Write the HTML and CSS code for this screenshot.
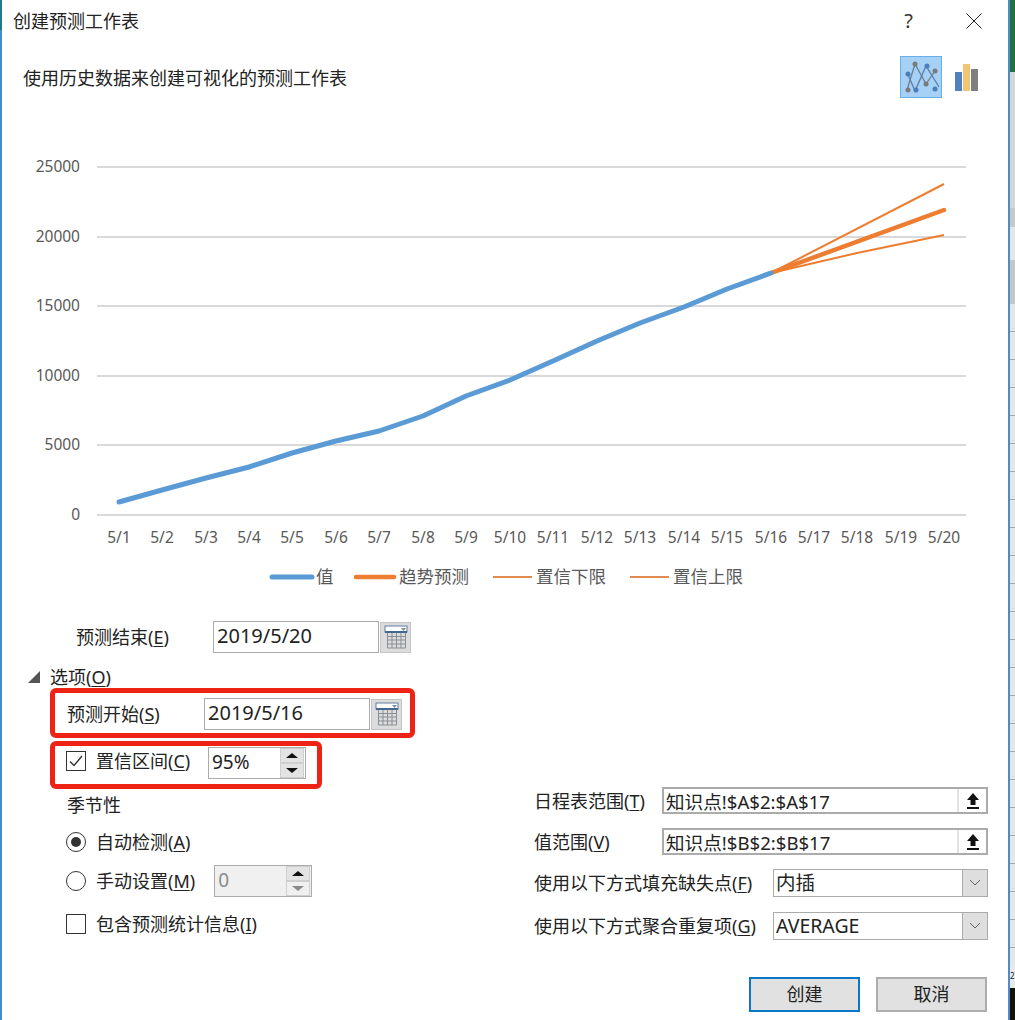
FILE: index.html
```html
<!DOCTYPE html>
<html>
<head>
    <meta charset="UTF-8">
    <title>创建预测工作表</title>
    <link rel="stylesheet" href="styles.css">
</head>
<body>
    <div class="window">
        <div class="left-edge"></div>

        <div class="dialog">
            <!-- Title bar -->
            <div class="titlebar">
                <div class="title">创建预测工作表</div>
                <div class="help">?</div>
                <svg class="close" width="16" height="16" viewBox="0 0 16 16"><path d="M0.5 0.5L15.5 15.5M15.5 0.5L0.5 15.5" stroke="#222" fill="none"/></svg>
            </div>

            <!-- Intro and chart type -->
            <div class="intro">
                <div class="intro-text">使用历史数据来创建可视化的预测工作表</div>
                <div class="type-btn selected">
                    <svg width="40" height="40" viewBox="0 0 40 40">
                        <path d="M6 15L14 34L25 9L38 30" stroke="#5d7fa8" stroke-width="1.3" fill="none"/>
                        <path d="M6 33L14 7L25 27L34 14" stroke="#6f7f92" stroke-width="1.3" fill="none"/>
                        <circle cx="7" cy="17" r="2.5" fill="#4a7ebb"/><circle cx="15" cy="33" r="2.5" fill="#4a7ebb"/>
                        <circle cx="26" cy="9" r="2.5" fill="#4a7ebb"/><circle cx="34" cy="32" r="2.5" fill="#4a7ebb"/>
                        <circle cx="7" cy="33" r="2.5" fill="#7a7a7a"/><circle cx="14" cy="7" r="2.5" fill="#7a7a7a"/>
                        <circle cx="25" cy="27" r="2.5" fill="#7a7a7a"/><circle cx="34" cy="14" r="2.5" fill="#7a7a7a"/>
                    </svg>
                </div>
                <svg class="type-bars" width="24" height="27" viewBox="0 0 24 27">
                    <rect x="0" y="8" width="7" height="19" fill="#4f81bd"/>
                    <rect x="8" y="0" width="7" height="27" fill="#f0c674"/>
                    <rect x="16" y="5" width="7" height="22" fill="#7f7f7f"/>
                </svg>
            </div>

            <!-- Forecast chart, viewBox uses window coordinates -->
            <svg class="chart" width="1006" height="492" viewBox="2 108 1006 492">
                <g stroke="#d9d9d9" stroke-width="2">
                    <path d="M97 167H966M97 237H966M97 306H966M97 376H966M97 445H966M97 515H966"/>
                </g>
                <g class="axis-y" text-anchor="end">
                    <text x="80" y="172">25000</text>
                    <text x="80" y="242">20000</text>
                    <text x="80" y="311">15000</text>
                    <text x="80" y="381">10000</text>
                    <text x="80" y="450">5000</text>
                    <text x="80" y="520">0</text>
                </g>
                <g class="axis-x" text-anchor="middle">
                    <text x="119" y="543">5/1</text>
                    <text x="162" y="543">5/2</text>
                    <text x="206" y="543">5/3</text>
                    <text x="249" y="543">5/4</text>
                    <text x="292" y="543">5/5</text>
                    <text x="336" y="543">5/6</text>
                    <text x="379" y="543">5/7</text>
                    <text x="423" y="543">5/8</text>
                    <text x="466" y="543">5/9</text>
                    <text x="510" y="543">5/10</text>
                    <text x="553" y="543">5/11</text>
                    <text x="597" y="543">5/12</text>
                    <text x="640" y="543">5/13</text>
                    <text x="684" y="543">5/14</text>
                    <text x="727" y="543">5/15</text>
                    <text x="771" y="543">5/16</text>
                    <text x="814" y="543">5/17</text>
                    <text x="857" y="543">5/18</text>
                    <text x="901" y="543">5/19</text>
                    <text x="944" y="543">5/20</text>
                </g>
                <path d="M771 273L944 184" stroke="#ed7d31" stroke-width="2" fill="none"/>
                <path d="M771 273L857 253L944 235" stroke="#ed7d31" stroke-width="2" fill="none"/>
                <path d="M771 273L944 210" stroke="#ed7d31" stroke-width="4.5" stroke-linecap="round" fill="none"/>
                <path d="M119 502L162 490L206 478L249 467L292 453L336 441L379 431L423 416L466 396L510 380L553 361L597 341L640 323L684 307L727 289L771 273" stroke="#5b9bd5" stroke-width="5" stroke-linecap="round" stroke-linejoin="round" fill="none"/>
                <path d="M272 577H312" stroke="#5b9bd5" stroke-width="5" stroke-linecap="round"/>
                <path d="M356 577H394" stroke="#ed7d31" stroke-width="4.5" stroke-linecap="round"/>
                <path d="M493 577H532M630 577H669" stroke="#e08b4f" stroke-width="2"/>
                <g class="legend">
                    <text x="316" y="583">值</text>
                    <text x="399" y="583">趋势预测</text>
                    <text x="536" y="583">置信下限</text>
                    <text x="673" y="583">置信上限</text>
                </g>
            </svg>

            <!-- Forecast end -->
            <div class="field end-row">
                <div class="label end-label">预测结束(<u>E</u>)</div>
                <div class="textbox date">2019/5/20</div>
                <div class="cal-btn">
                    <svg width="24" height="24" viewBox="0 0 24 24">
                        <rect x="1" y="1" width="22" height="6" fill="#fff" stroke="#5f7f9f"/>
                        <path d="M1 7H23" stroke="#44688f" stroke-width="2"/>
                        <path d="M17 3h5l-2.500 3z" fill="#7a8ea5"/>
                        <path d="M3.500 8V23M8 8V23M12.500 8V23M17 8V23M21.500 8V23M3.500 11.500H21.500M3.500 15H21.500M3.500 19H21.500M3.500 23H21.500" stroke="#8a8f96" fill="none"/>
                    </svg>
                </div>
            </div>

            <div class="options">
                <!-- Left column -->
                <div class="options-left">
                    <div class="options-head">
                        <svg width="12" height="12" viewBox="0 0 12 12"><path d="M12 0V12H0z" fill="#555"/></svg>
                        <div class="label">选项(<u>O</u>)</div>
                    </div>

                    <div class="red-box start-box">
                        <div class="label start-label">预测开始(<u>S</u>)</div>
                        <div class="textbox date">2019/5/16</div>
                        <div class="cal-btn">
                            <svg width="24" height="24" viewBox="0 0 24 24">
                                <rect x="1" y="1" width="22" height="6" fill="#fff" stroke="#5f7f9f"/>
                                <path d="M1 7H23" stroke="#44688f" stroke-width="2"/>
                                <path d="M17 3h5l-2.500 3z" fill="#7a8ea5"/>
                                <path d="M3.500 8V23M8 8V23M12.500 8V23M17 8V23M21.500 8V23M3.500 11.500H21.500M3.500 15H21.500M3.500 19H21.500M3.500 23H21.500" stroke="#8a8f96" fill="none"/>
                            </svg>
                        </div>
                    </div>

                    <div class="red-box conf-box">
                        <div class="checkbox">
                            <svg width="18" height="18" viewBox="0 0 18 18"><path d="M3 9.500L7 13.500L15 4" stroke="#333" stroke-width="1.400" fill="none"/></svg>
                        </div>
                        <div class="label conf-label">置信区间(<u>C</u>)</div>
                        <div class="spin conf-spin">
                            <div class="spin-value">95%</div>
                            <div class="spin-btns">
                                <div class="spin-btn"><span class="arrow-up"></span></div>
                                <div class="spin-btn"><span class="arrow-down"></span></div>
                            </div>
                        </div>
                    </div>

                    <div class="label season-head">季节性</div>

                    <div class="check-row auto-row">
                        <div class="radio on"></div>
                        <div class="label">自动检测(<u>A</u>)</div>
                    </div>
                    <div class="check-row manual-row">
                        <div class="radio"></div>
                        <div class="label manual-label">手动设置(<u>M</u>)</div>
                        <div class="spin disabled">
                            <div class="spin-value">0</div>
                            <div class="spin-btns">
                                <div class="spin-btn"><span class="arrow-up"></span></div>
                                <div class="spin-btn off"><span class="arrow-down"></span></div>
                            </div>
                        </div>
                    </div>
                    <div class="check-row stats-row">
                        <div class="checkbox"></div>
                        <div class="label">包含预测统计信息(<u>I</u>)</div>
                    </div>
                </div>

                <!-- Right column -->
                <div class="options-right">
                    <div class="field range-row">
                        <div class="label range-label">日程表范围(<u>T</u>)</div>
                        <div class="range-box">
                            <div class="range-value">知识点!$A$2:$A$17</div>
                            <div class="pick-btn"><svg width="14" height="17" viewBox="0 0 14 17"><path d="M7 1L13 8H9.500V13H4.500V8H1zM1 15H13V17H1z" fill="#111"/></svg></div>
                        </div>
                    </div>
                    <div class="field range-row">
                        <div class="label range-label">值范围(<u>V</u>)</div>
                        <div class="range-box">
                            <div class="range-value">知识点!$B$2:$B$17</div>
                            <div class="pick-btn"><svg width="14" height="17" viewBox="0 0 14 17"><path d="M7 1L13 8H9.500V13H4.500V8H1zM1 15H13V17H1z" fill="#111"/></svg></div>
                        </div>
                    </div>
                    <div class="field select-row">
                        <div class="label select-label">使用以下方式填充缺失点(<u>F</u>)</div>
                        <div class="select-box">
                            <div class="select-value">内插</div>
                            <div class="select-btn"><svg width="12" height="8" viewBox="0 0 12 8"><path d="M1 1L6 6L11 1" stroke="#666" fill="none"/></svg></div>
                        </div>
                    </div>
                    <div class="field select-row last">
                        <div class="label select-label">使用以下方式聚合重复项(<u>G</u>)</div>
                        <div class="select-box">
                            <div class="select-value">AVERAGE</div>
                            <div class="select-btn"><svg width="12" height="8" viewBox="0 0 12 8"><path d="M1 1L6 6L11 1" stroke="#666" fill="none"/></svg></div>
                        </div>
                    </div>
                </div>
            </div>

            <!-- Buttons -->
            <div class="footer">
                <div class="btn primary">创建</div>
                <div class="btn">取消</div>
            </div>
        </div>

        <!-- Sliver of the worksheet behind the dialog -->
        <div class="right-edge">
            <div class="sheet-green"></div>
            <div class="sheet-ribbon"></div>
            <div class="sheet-header"></div>
            <div class="sheet-cells"></div>
            <div class="sheet-tabs">2</div>
            <div class="sheet-dark"></div>
        </div>
    </div>
</body>
</html>
```

FILE: styles.css
```css
html, body { margin: 0; padding: 0; background: #fff; }
body { font-family: "Noto Sans", "Noto Sans CJK SC", sans-serif; font-size: 18px; color: #222; }
.window { display: flex; width: 1015px; height: 1020px; overflow: hidden; }
.left-edge { width: 2px; flex: none; background: linear-gradient(#1f7a8c 0, #1f7a8c 30px, #3f8fd0 30px); }
.dialog { width: 1006px; flex: none; background: #fff; }

.titlebar { display: flex; align-items: center; height: 44px; }
.title { margin-left: 11px; margin-top: -2px; flex: 1; line-height: 24px; }
.help { margin-right: 53px; font-size: 20px; margin-top: -3px; color: #333; }
.close { margin-right: 26px; margin-top: -3px; }

.intro { display: flex; align-items: center; height: 64px; padding-left: 21px; }
.intro-text { flex: 1; margin-top: 2px; }
.type-btn { width: 40px; height: 40px; margin-top: 2px; border: 1px solid #6aaee8; background: #a6d1f7; }
.type-btn svg { display: block; }
.type-bars { margin-left: 13px; margin-right: 29px; margin-top: 3px; }

.chart { display: block; }
.chart text { font-family: "Noto Sans", "Noto Sans CJK SC", sans-serif; fill: #595959; }
.axis-y text, .axis-x text { font-size: 15.5px; }
.legend text { font-size: 17.5px; }

.label { white-space: nowrap; line-height: 24px; }
.label u { text-underline-offset: 2px; }
.field { display: flex; align-items: center; }

.textbox { box-sizing: border-box; border: 1px solid #ababab; background: #fff; padding-left: 3px; }
.date { width: 166px; height: 32px; line-height: 28px; font-size: 20px; }
.cal-btn { box-sizing: border-box; width: 31px; height: 31px; margin-left: 1px; background: #dcdcdc; border: 1px solid #c4c4c4; display: flex; align-items: center; justify-content: center; }

.end-row { margin-top: 21px; padding-left: 74px; }
.end-label { width: 137px; }

.options { display: grid; grid-template-columns: 532px 454px; margin-top: 13px; }

.options-head { display: flex; align-items: center; gap: 10px; padding-left: 26px; height: 22px; }
.red-box { box-sizing: border-box; display: flex; align-items: center; margin-left: 48px; border: 5px solid #ee2316; border-radius: 6px; }
.start-box { width: 365px; height: 50px; padding-left: 12px; padding-top: 2px; }
.start-label { width: 137px; }
.conf-box { width: 272px; height: 48px; margin-top: 3px; padding-left: 11px; padding-bottom: 4px; }
.conf-box .checkbox { margin-bottom: 4px; }
.conf-label { margin-left: 10px; width: 112px; margin-bottom: 4px; }

.checkbox { box-sizing: border-box; width: 20px; height: 20px; flex: none; border: 1px solid #333; background: #fff; }
.checkbox svg { display: block; margin: 0; }
.radio { box-sizing: border-box; width: 20px; height: 20px; flex: none; border: 1px solid #333; border-radius: 50%; background: #fff; position: relative; }
.radio.on::after { content: ""; position: absolute; left: 4px; top: 4px; width: 10px; height: 10px; border-radius: 50%; background: #333; }

.spin { box-sizing: border-box; display: flex; width: 98px; height: 32px; border: 1px solid #ababab; background: #fff; }
.spin-value { flex: 1; padding-left: 3px; font-size: 19px; line-height: 28px; }
.spin-btns { display: flex; flex-direction: column; width: 24px; margin-right: 1px; padding: 0; }
.spin-btn { flex: 1; display: flex; align-items: center; justify-content: center; background: #e3e3e3; border: 1px solid #cfcfcf; }
.arrow-up { border: 5px solid transparent; border-top: 0; border-bottom: 5px solid #111; border-left-width: 6px; border-right-width: 6px; }
.arrow-down { border: 5px solid transparent; border-bottom: 0; border-top: 5px solid #111; border-left-width: 6px; border-right-width: 6px; }
.spin.disabled { background: #f0f0f0; color: #8a8a8a; }
.spin-btn.off { background: #f0f0f0; }
.spin-btn.off .arrow-down { border-top-color: #8a8a8a; }

.season-head { margin-top: 4px; padding-left: 65px; }
.check-row { display: flex; align-items: center; gap: 10px; padding-left: 64px; }
.auto-row { margin-top: 13px; height: 24px; }
.manual-row { margin-top: 11px; height: 32px; }
.manual-label { margin-right: 9px; }
.stats-row { margin-top: 15px; height: 24px; }

.options-right { padding-top: 121px; }
.range-row, .select-row { margin-bottom: 14px; }
.range-row { height: 27px; }
.select-row { height: 28px; }
.select-row.last { margin-top: 15px; margin-bottom: 0; }
.range-label { width: 128px; }
.select-label { width: 239px; }
.range-box { box-sizing: border-box; display: flex; width: 326px; height: 27px; border: 2px solid #ababab; background: #fff; }
.range-value { flex: 1; padding-left: 2px; line-height: 23px; font-size: 18.6px; white-space: nowrap; padding-top: 1px; }
.pick-btn { width: 27px; display: flex; align-items: center; justify-content: center; border-left: 2px solid #e3e3e3; }
.select-box { box-sizing: border-box; display: flex; width: 215px; height: 28px; border: 1px solid #ababab; background: #fff; }
.select-value { flex: 1; padding-left: 2px; line-height: 26px; font-size: 19.5px; }
.select-btn { width: 24px; display: flex; align-items: center; justify-content: center; background: #dedede; border-left: 1px solid #ababab; }

.footer { display: flex; justify-content: flex-end; gap: 16px; padding-right: 21px; margin-top: 37px; }
.btn { box-sizing: border-box; width: 111px; height: 35px; line-height: 31px; text-align: center; background: #e1e1e1; border: 2px solid #adadad; }
.btn.primary { border-color: #0a78c8; }

.right-edge { width: 7px; flex: none; border-left: 2px solid #4f8cc4; box-sizing: border-box; display: flex; flex-direction: column; background: #e8e8e8; }
.sheet-green { height: 72px; background: #1f7246; }
.sheet-ribbon { height: 136px; background: #d6d6d6; }
.sheet-header { height: 96px; background: linear-gradient(#c8c8c8 0, #c8c8c8 19px, #e6e6e6 19px, #e6e6e6 52px, #c6c6c6 52px); }
.sheet-cells { height: 660px; background: repeating-linear-gradient(#e6e6e6 0, #e6e6e6 27px, #a8a8a8 27px, #a8a8a8 28px); }
.sheet-tabs { height: 24px; font-size: 8px; line-height: 24px; background: #e8e8e8; white-space: nowrap; }
.sheet-dark { flex: 1; background: #14100f; }
```
